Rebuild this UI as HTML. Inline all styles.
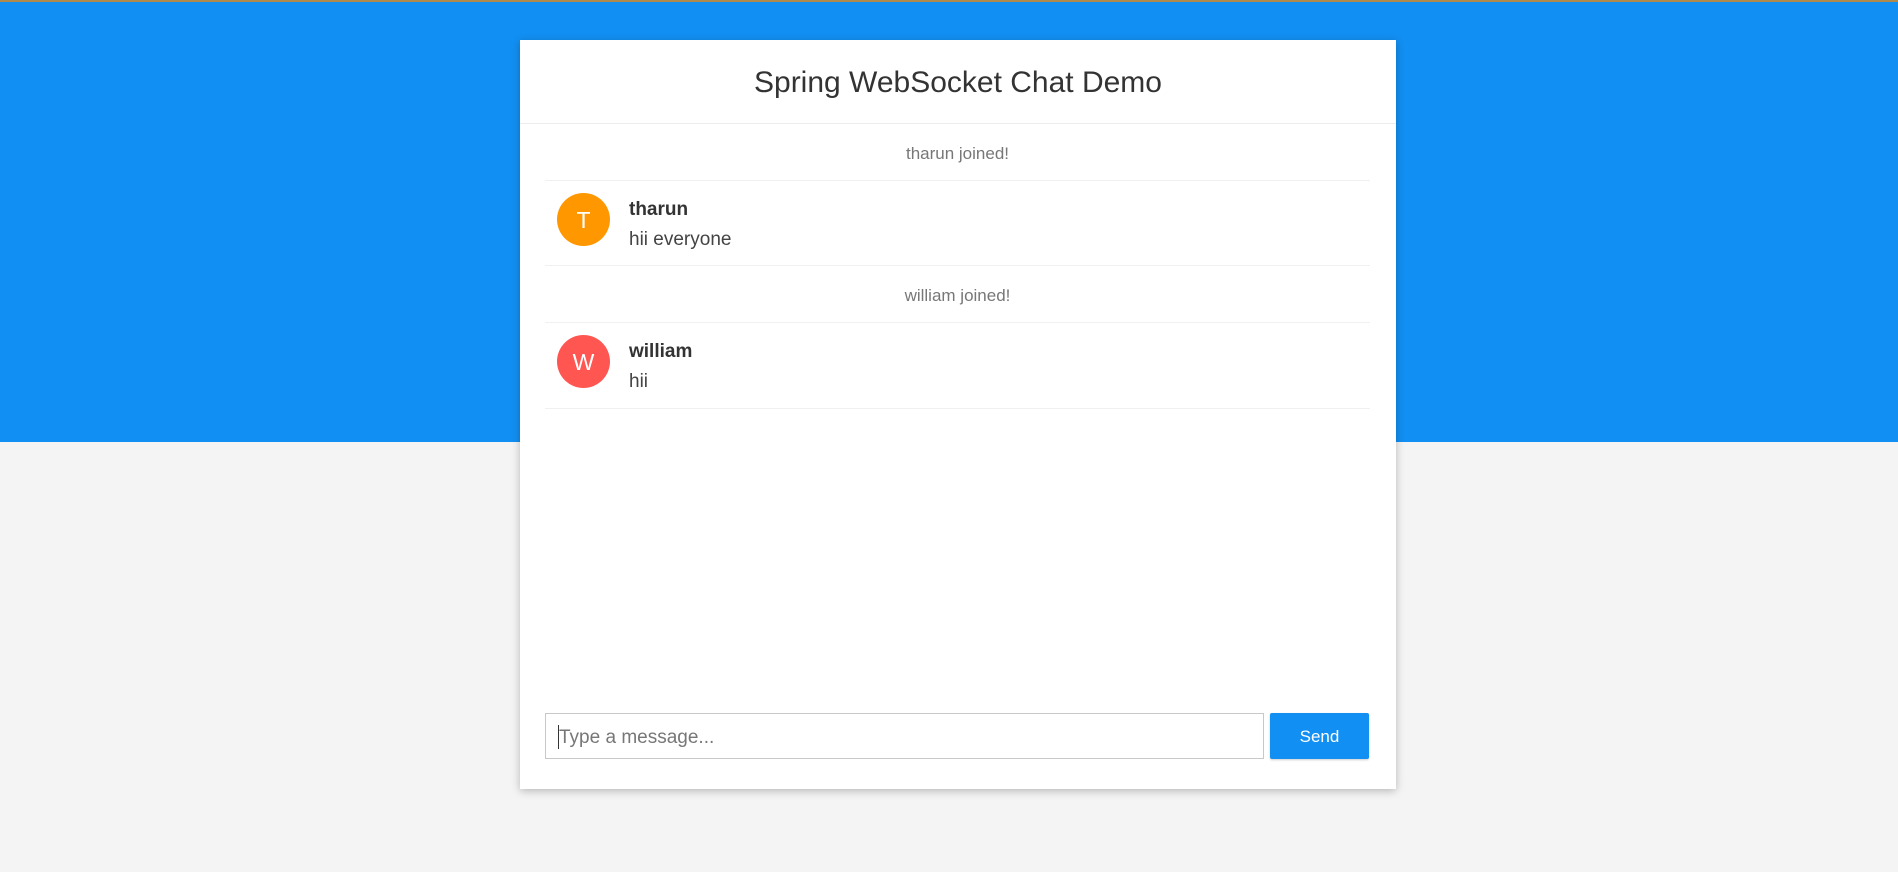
<!DOCTYPE html>
<html><head><style>
html,body{margin:0;padding:0;}
body{width:1898px;height:872px;background:#f4f4f4;position:relative;overflow:hidden;font-family:"Liberation Sans",Arial,sans-serif;}
.topline{position:absolute;left:0;top:0;width:100%;height:2px;background:#b08a4a;}
.blue{position:absolute;left:0;top:1px;width:100%;height:441px;background:#128ff2;}
.card{position:absolute;left:520px;top:40px;width:876px;height:749px;background:#fff;box-shadow:0 2px 8px rgba(0,0,0,0.25);}
.hdr{height:83px;border-bottom:1px solid #ececec;text-align:center;line-height:85px;font-size:30px;color:#333;}
.ev{position:absolute;left:25px;width:825px;text-align:center;font-size:17px;color:#777;}
.ln{position:absolute;left:25px;width:825px;height:1px;background:#f0f0f0;}
.av{position:absolute;left:37px;width:53px;height:53px;border-radius:50%;color:#fff;text-align:center;line-height:54px;font-size:23px;}
.nm{position:absolute;left:109px;font-weight:bold;font-size:19px;color:#333;}
.msg{position:absolute;left:109px;font-size:19px;color:#444;}
.inp{position:absolute;left:25px;top:673px;width:719px;height:46px;border:1px solid #c8c8c8;box-sizing:border-box;font-size:19px;color:#777;line-height:47px;padding-left:13px;}
.inp:before{content:"";position:absolute;left:12px;top:11px;width:1px;height:24px;background:#333;}
.btn{position:absolute;left:750px;top:673px;width:99px;height:46px;background:#128ff2;border-radius:2px;color:#fff;text-align:center;line-height:48px;font-size:17px;box-shadow:0 1px 2px rgba(0,0,0,0.2);}
</style></head><body>
<div class="blue"></div><div class="topline"></div>
<div class="card">
<div class="hdr">Spring WebSocket Chat Demo</div>
<div class="ev" style="top:104px">tharun joined!</div>
<div class="ln" style="top:140px"></div>
<div class="av" style="top:153px;background:#ff9800">T</div>
<div class="nm" style="top:159px">tharun</div>
<div class="msg" style="top:189px">hii everyone</div>
<div class="ln" style="top:225px"></div>
<div class="ev" style="top:246px">william joined!</div>
<div class="ln" style="top:282px"></div>
<div class="av" style="top:295px;background:#ff5652">W</div>
<div class="nm" style="top:301px">william</div>
<div class="msg" style="top:331px">hii</div>
<div class="ln" style="top:368px"></div>
<div class="inp">Type a message...</div>
<div class="btn">Send</div>
</div>
</body></html>
